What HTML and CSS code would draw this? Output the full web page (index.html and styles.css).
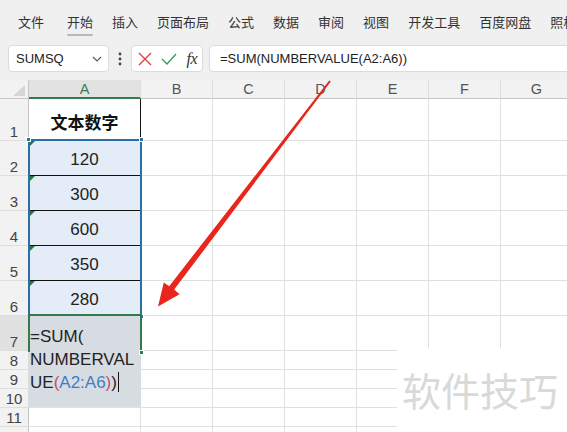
FILE: index.html
```html
<!DOCTYPE html>
<html>
<head>
<meta charset="utf-8">
<link rel="stylesheet" href="styles.css">
</head>
<body>
<div class="app">
  <nav class="menu">
    <span class="tab first">文件</span>
    <span class="tab active">开始</span>
    <span class="tab">插入</span>
    <span class="tab">页面布局</span>
    <span class="tab">公式</span>
    <span class="tab">数据</span>
    <span class="tab">审阅</span>
    <span class="tab">视图</span>
    <span class="tab">开发工具</span>
    <span class="tab">百度网盘</span>
    <span class="tab">照相</span>
  </nav>
  <div class="fbar">
    <div class="namebox">
      <span>SUMSQ</span>
      <svg class="chev" width="10" height="6" viewBox="0 0 10 6"><path d="M1 1 L5 5 L9 1" fill="none" stroke="#555" stroke-width="1.1"/></svg>
    </div>
    <div class="dots">
      <svg width="4" height="14" viewBox="0 0 4 14"><circle cx="2" cy="2" r="1.4" fill="#444"/><circle cx="2" cy="7" r="1.4" fill="#444"/><circle cx="2" cy="12" r="1.4" fill="#444"/></svg>
    </div>
    <div class="btns">
      <svg width="14" height="14" viewBox="0 0 14 14"><path d="M1 1 L13 13 M13 1 L1 13" stroke="#e0403a" stroke-width="1.4" fill="none"/></svg>
      <svg width="16" height="12" viewBox="0 0 16 12"><path d="M1 6 L6 11 L15 1" stroke="#3c9a5c" stroke-width="1.4" fill="none"/></svg>
      <span class="fx">fx</span>
    </div>
    <div class="formula">=SUM(NUMBERVALUE(A2:A6))</div>
  </div>
  <div class="sheet">
    <div class="grid">
      <div class="hd corner"><svg width="12" height="11" viewBox="0 0 12 11"><path d="M12 0 L12 11 L0 11 Z" fill="#d6d6d6"/></svg></div>
      <div class="hd ch selcol">A</div>
      <div class="hd ch">B</div>
      <div class="hd ch">C</div>
      <div class="hd ch">D</div>
      <div class="hd ch">E</div>
      <div class="hd ch">F</div>
      <div class="hd ch">G</div>

      <div class="rh">1</div><div class="c a1">文本数字</div><div class="c"></div><div class="c"></div><div class="c"></div><div class="c"></div><div class="c"></div><div class="c"></div>
      <div class="rh">2</div><div class="c num bl"><i class="tri"></i>120</div><div class="c"></div><div class="c"></div><div class="c"></div><div class="c"></div><div class="c"></div><div class="c"></div>
      <div class="rh">3</div><div class="c num bl"><i class="tri"></i>300</div><div class="c"></div><div class="c"></div><div class="c"></div><div class="c"></div><div class="c"></div><div class="c"></div>
      <div class="rh">4</div><div class="c num bl"><i class="tri"></i>600</div><div class="c"></div><div class="c"></div><div class="c"></div><div class="c"></div><div class="c"></div><div class="c"></div>
      <div class="rh">5</div><div class="c num bl"><i class="tri"></i>350</div><div class="c"></div><div class="c"></div><div class="c"></div><div class="c"></div><div class="c"></div><div class="c"></div>
      <div class="rh">6</div><div class="c num"><i class="tri"></i>280</div><div class="c"></div><div class="c"></div><div class="c"></div><div class="c"></div><div class="c"></div><div class="c"></div>
      <div class="rh selrow">7</div><div class="c"></div><div class="c"></div><div class="c"></div><div class="c"></div><div class="c"></div><div class="c"></div><div class="c"></div>
      <div class="rh sm">8</div><div class="c"></div><div class="c"></div><div class="c"></div><div class="c"></div><div class="c"></div><div class="c"></div><div class="c"></div>
      <div class="rh sm">9</div><div class="c"></div><div class="c"></div><div class="c"></div><div class="c"></div><div class="c"></div><div class="c"></div><div class="c"></div>
      <div class="rh sm">10</div><div class="c"></div><div class="c"></div><div class="c"></div><div class="c"></div><div class="c"></div><div class="c"></div><div class="c"></div>
      <div class="rh sm">11</div><div class="c"></div><div class="c"></div><div class="c"></div><div class="c"></div><div class="c"></div><div class="c"></div><div class="c"></div>
      <div class="rh sm"></div><div class="c"></div><div class="c"></div><div class="c"></div><div class="c"></div><div class="c"></div><div class="c"></div><div class="c"></div>
    </div>

    <div class="selection">
      <i class="hdl h-tl"></i><i class="hdl h-tr"></i><i class="hdl h-br"></i>
    </div>
    <div class="editbox">
      <div class="edittext">=SUM(<br>NUMBERVAL<br>UE<span class="p1">(</span><span class="rf">A2:A6</span><span class="p1">)</span>)<span class="caret"></span></div>
    </div>
    <div class="editframe"><i class="ghdl g-br"></i></div>

    <svg class="arrow" width="567" height="352" viewBox="0 80 567 352">
      <polygon points="330.8,81.6 174.2,289.6 179.5,294.2 158,306.5 163.8,282.6 169.2,286.2 329.2,80.4" fill="#e8261c"/>
    </svg>
    <div class="watermark">软件技巧</div>
  </div>
</div>
</body>
</html>
```

FILE: styles.css
```css
* { box-sizing: border-box; margin: 0; padding: 0; }
html, body { width: 567px; height: 432px; overflow: hidden; }
body {
  background: #f0f0f0;
  font-family: "Liberation Sans", "Noto Sans CJK SC", sans-serif;
  color: #222;
}
.app { width: 567px; height: 432px; overflow: hidden; display: flex; flex-direction: column; }

.menu {
  height: 40px;
  display: flex;
  align-items: center;
  padding: 4px 0 0 18px;
  gap: 19px;
  font-family: "Noto Sans CJK SC", sans-serif;
  font-size: 13px;
  color: #333;
  white-space: nowrap;
  flex: none;
}
.tab { position: relative; line-height: 16px; flex: none; }
.tab.first { margin-right: 4px; }
.tab.active::after {
  content: "";
  position: absolute;
  left: 0; right: 0;
  bottom: -6px;
  height: 2px;
  background: #b8b8b8;
  border-radius: 1px;
}

.fbar {
  height: 40px;
  display: flex;
  align-items: flex-start;
  padding: 5px 0 0 8px;
  flex: none;
}
.namebox {
  width: 101px;
  height: 27px;
  background: #fff;
  border: 1px solid #dcdcdc;
  border-radius: 4px;
  display: flex;
  align-items: center;
  justify-content: space-between;
  padding: 0 6px 0 7px;
  font-size: 13px;
  color: #222;
}
.chev { margin-top: 1px; }
.dots {
  width: 22px;
  height: 27px;
  display: flex;
  align-items: center;
  justify-content: center;
}
.btns {
  width: 72px;
  height: 27px;
  background: #fff;
  border: 1px solid #dcdcdc;
  border-radius: 4px;
  display: flex;
  align-items: center;
  justify-content: space-between;
  padding: 0 5px 0 6px;
}
.fx {
  font-family: "Liberation Serif", serif;
  font-style: italic;
  font-size: 16px;
  color: #333;
  letter-spacing: -0.5px;
}
.formula {
  flex: 1;
  margin-left: 6px;
  margin-right: -10px;
  height: 27px;
  background: #fff;
  border: 1px solid #dcdcdc;
  border-radius: 4px;
  display: flex;
  align-items: center;
  padding-left: 10px;
  font-size: 13px;
  color: #222;
}

.sheet { position: relative; flex: 1; background: #fff; overflow: hidden; }
.grid {
  display: grid;
  grid-template-columns: 29px 112px repeat(6, 72px);
  grid-template-rows: 19px 42px repeat(6, 35px) repeat(5, 19px);
  width: 575px;
}
.hd {
  background: #f2f2f2;
  border-bottom: 1px solid #c6c6c6;
  border-right: 1px solid #dedede;
}
.corner { border-right: 1px solid #c6c6c6; display: flex; align-items: flex-end; justify-content: flex-end; padding: 0 3px 2px 0; }
.ch {
  display: flex;
  align-items: center;
  justify-content: center;
  font-size: 14.5px;
  color: #555;
}
.selcol {
  background: #e2e2e2;
  color: #3a7a55;
  border-bottom: 2px solid #2f7a4f;
}
.rh {
  background: #f2f2f2;
  border-right: 1px solid #c6c6c6;
  border-bottom: 1px solid #dedede;
  display: flex;
  align-items: flex-end;
  justify-content: center;
  font-size: 15px;
  line-height: 17px;
  color: #444;
}
.rh.sm { align-items: center; }
.selrow { background: #e1e1e1; }
.c {
  border-right: 1px solid #e0e0e0;
  border-bottom: 1px solid #e0e0e0;
  position: relative;
}
.a1 {
  border-right: 1px solid #111;
  display: flex;
  align-items: center;
  justify-content: center;
  padding-top: 4px;
  font-family: "Noto Sans CJK SC", sans-serif;
  font-weight: 700;
  font-size: 17px;
  color: #111;
}
.num {
  background: #e4edf7;
  display: flex;
  align-items: center;
  justify-content: center;
  padding-top: 4px;
  font-size: 17px;
  color: #222;
}
.bl { border-bottom: 1px solid #111; }
.tri {
  position: absolute;
  left: 1px; top: 0;
  width: 0; height: 0;
  border-top: 5px solid #1f7a3c;
  border-right: 5px solid transparent;
}

.selection {
  position: absolute;
  left: 28px;
  top: 59px;
  width: 114px;
  height: 178px;
  border: 2px solid #2b6ea8;
}
.hdl {
  position: absolute;
  width: 5px; height: 5px;
  background: #2b6ea8;
  border: 1px solid #fff;
}
.h-tl { left: -4px; top: -4px; }
.h-tr { right: -4px; top: -4px; }
.h-br { right: -4px; bottom: -4px; }

.editbox {
  position: absolute;
  left: 28px;
  top: 235px;
  width: 113px;
  height: 92px;
  background: #d7dce3;
}
.edittext {
  padding: 10px 0 0 2px;
  font-size: 17px;
  line-height: 23px;
  color: #222;
  white-space: nowrap;
}
.p1 { color: #c0506a; }
.rf { color: #3d7fc4; }
.caret {
  display: inline-block;
  width: 1px;
  height: 20px;
  background: #111;
  vertical-align: -4px;
  margin-left: 1px;
}
.editframe {
  position: absolute;
  left: 28px;
  top: 234px;
  width: 114px;
  height: 38px;
  border: 2px solid #2f7a4f;
  border-bottom: none;
}
.ghdl {
  position: absolute;
  width: 5px; height: 5px;
  background: #2f7a4f;
  border: 1px solid #fff;
}
.g-br { right: -4px; bottom: -3px; }

.arrow { position: absolute; left: 0; top: 0; }

.watermark {
  position: absolute;
  left: 397px;
  top: 268px;
  width: 180px;
  height: 90px;
  background: #fff;
  padding: 16px 0 0 5px;
  font-family: "Noto Sans CJK SC", sans-serif;
  font-size: 39px;
  line-height: 50px;
  color: #d9d9d9;
  white-space: nowrap;
}
```
